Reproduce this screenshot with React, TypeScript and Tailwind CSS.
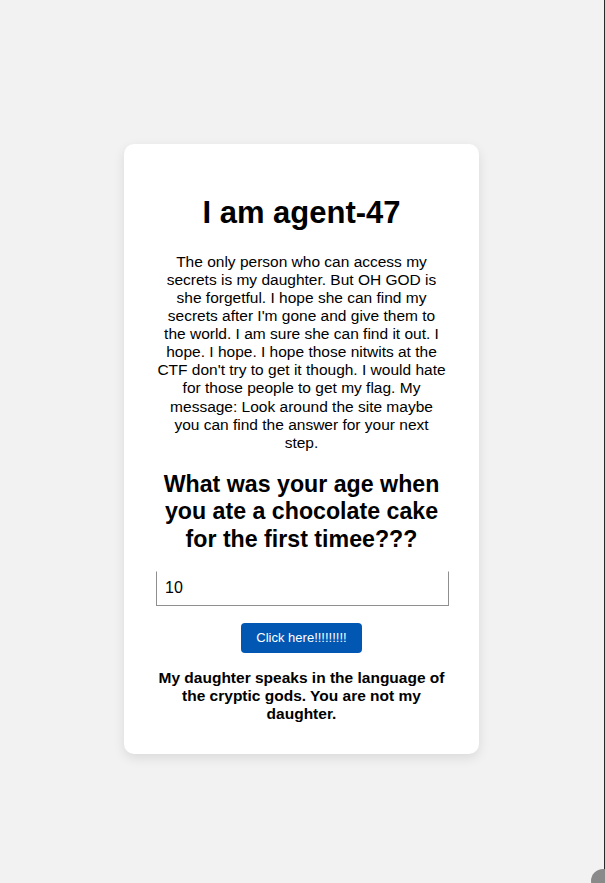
export default function App() {
  return (
    <div className="min-h-screen bg-[#f2f2f2] pt-[144px] pr-[2px] font-['Liberation_Sans',Arial,sans-serif] text-black">
      <div className="mx-auto w-[355px] rounded-[10px] bg-white px-[32px] pt-[30px] pb-[31px] text-center shadow-[0_4px_12px_rgba(0,0,0,0.1)]">
        <h1 className="my-[21px] text-[31px] font-bold leading-[36.8px]">I am agent-47</h1>
        <p className="my-[16px] text-[15.5px] leading-[18.1px]">
          The only person who can access my secrets is my daughter. But OH GOD is she forgetful. I hope she can
          find my secrets after I'm gone and give them to the world. I am sure she can find it out. I hope. I
          hope. I hope those nitwits at the CTF don't try to get it though. I would hate for those people to get
          my flag. My message: Look around the site maybe you can find the answer for your next step.
        </p>
        <h2 className="mt-[19px] mb-[17px] text-[23.2px] font-bold leading-[27.6px]">
          What was your age when you ate a chocolate cake for the first timee???
        </h2>
        <input
          type="text"
          defaultValue="10"
          className="block h-[35px] w-[293px] border border-t-white border-x-[#8f8f8f] border-b-[#8f8f8f] px-[8px] text-left text-[16px] text-black outline-none"
        />
        <button className="mt-[17px] h-[30px] rounded-[4px] bg-[#0257b3] px-[15px] text-[13px] leading-[15.4px] text-white">
          Click here!!!!!!!!!
        </button>
        <p className="mt-[16px] text-[15.5px] font-bold leading-[18.1px]">
          My daughter speaks in the language of the cryptic gods. You are not my daughter.
        </p>
      </div>
      <div className="fixed right-0 top-0 h-full w-px bg-[#2a2a2a]" />
      <div className="fixed -bottom-[10px] -right-[10px] h-[24px] w-[24px] rounded-full bg-[#8a8a8a]" />
    </div>
  );
}
